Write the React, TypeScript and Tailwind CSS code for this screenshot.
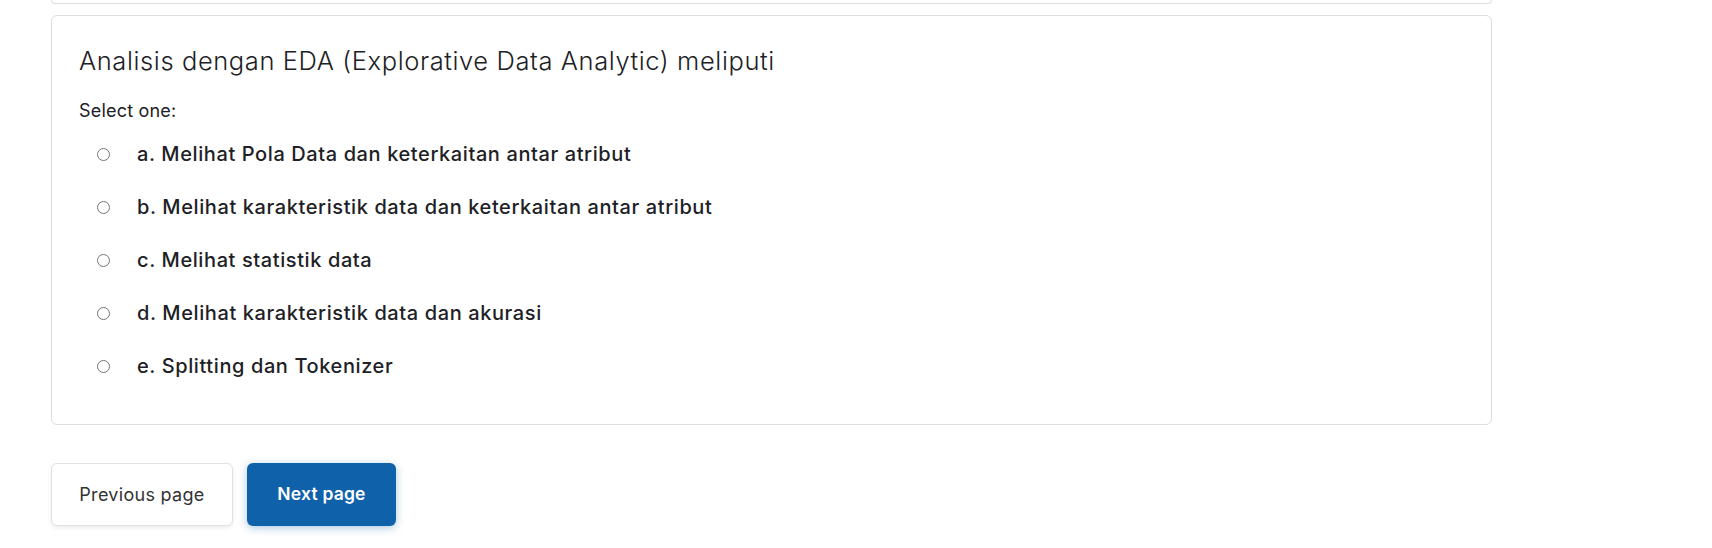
const options = [
  "a. Melihat Pola Data dan keterkaitan antar atribut",
  "b. Melihat karakteristik data dan keterkaitan antar atribut",
  "c. Melihat statistik data",
  "d. Melihat karakteristik data dan akurasi",
  "e. Splitting dan Tokenizer",
];

function QuestionCard() {
  return (
    <div className="mt-[11px] rounded-[6px] border border-[#dedede] bg-white px-[27px] pt-[30px] pb-[43px]">
      <h2 className="text-[25.5px] leading-[29px] font-light tracking-[0.6px] text-[#1d2125]">
        Analisis dengan EDA (Explorative Data Analytic) meliputi
      </h2>
      <p className="mt-[22px] text-[18px] leading-[28.5px] tracking-[0.2px] text-[#1d2125]">Select one:</p>
      <div className="mt-[14px] flex flex-col gap-[24px]">
        {options.map((label, i) => (
          <label key={i} className="flex items-center">
            <input
              type="radio"
              name="q1"
              className="m-0 ml-[18px] h-[13px] w-[13px]"
            />
            <span className="ml-[27px] text-[20px] leading-[29px] font-medium tracking-[0.6px] text-[#1d2125]">
              {label}
            </span>
          </label>
        ))}
      </div>
    </div>
  );
}

export default function App() {
  return (
    <div className="min-h-[548px] w-[1712px] bg-white pl-[51px] font-['Inter','Liberation_Sans',sans-serif]">
      <div className="w-[1441px]">
        {/* tail of the previous question card */}
        <div className="h-[4px] rounded-b-[6px] border-x border-b border-[#dedede]" />
        <QuestionCard />
        <div className="mt-[38px] flex gap-[14px]">
          <button className="h-[63px] w-[182px] rounded-[6px] border border-[#e2e2e2] bg-white text-[18px] tracking-[0.3px] text-[#333] shadow-[0_2px_4px_rgba(0,0,0,0.08)]">
            Previous page
          </button>
          <button className="h-[63px] w-[149px] rounded-[6px] bg-[#0f62aa] text-[17.5px] font-semibold tracking-[0.2px] text-white shadow-[0_2px_8px_rgba(15,98,170,0.35)]">
            Next page
          </button>
        </div>
      </div>
    </div>
  );
}
